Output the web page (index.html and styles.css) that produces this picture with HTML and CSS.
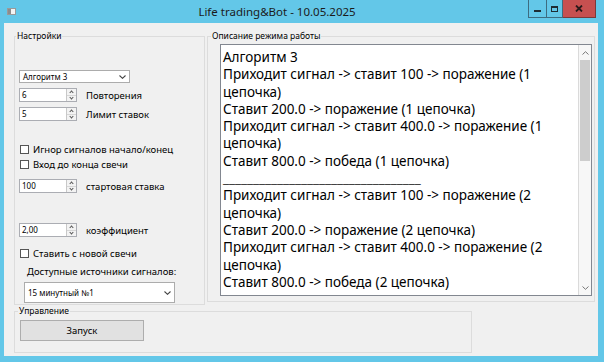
FILE: index.html
```html
<!DOCTYPE html>
<html lang="ru">
<head>
  <meta charset="UTF-8">
  <title>Life trading&amp;Bot - 10.05.2025</title>
  <link rel="stylesheet" href="styles.css">
</head>
<body>
  <div class="window">
    <!-- Title bar -->
    <div class="titlebar">
      <svg class="app-icon" width="9" height="7" viewBox="0 0 9 7">
        <rect x="0.5" y="0.5" width="8" height="6" fill="#f4f4f4" stroke="#9a9a9a"/>
        <rect x="1" y="1" width="3" height="5" fill="#8c8c8c"/>
      </svg>
      <div class="title">Life trading&amp;Bot - 10.05.2025</div>
      <div class="caption-buttons">
        <div class="cap-btn cap-min"><span></span></div>
        <div class="cap-btn cap-max"><span></span></div>
        <div class="cap-btn cap-close">
          <svg width="8" height="7" viewBox="0 0 8 7"><path d="M1 0.5 L7 6.5 M7 0.5 L1 6.5" stroke="#2b1a1a" stroke-width="1.8"/></svg>
        </div>
      </div>
    </div>

    <div class="client">
      <div class="top-row">
        <!-- Settings -->
        <fieldset class="group settings">
          <legend>Настройки</legend>

          <div class="combo algo">
            <span class="combo-text">Алгоритм 3</span>
            <svg class="chevron" width="7" height="4" viewBox="0 0 7 4"><path d="M0.5 0.5 L3.5 3.3 L6.5 0.5" fill="none" stroke="#444" stroke-width="1.1"/></svg>
          </div>

          <div class="spin-row first">
            <div class="spin">
              <span class="spin-value">6</span>
              <span class="spin-btns"><i class="up"></i><i class="down"></i></span>
            </div>
            <span class="spin-label">Повторения</span>
          </div>
          <div class="spin-row">
            <div class="spin">
              <span class="spin-value">5</span>
              <span class="spin-btns"><i class="up"></i><i class="down"></i></span>
            </div>
            <span class="spin-label">Лимит ставок</span>
          </div>

          <label class="check first-check"><span class="box"></span>Игнор сигналов начало/конец</label>
          <label class="check second-check"><span class="box"></span>Вход до конца свечи</label>

          <div class="spin-row stake">
            <div class="spin">
              <span class="spin-value">100</span>
              <span class="spin-btns"><i class="up"></i><i class="down"></i></span>
            </div>
            <span class="spin-label">стартовая ставка</span>
          </div>
          <div class="spin-row coef">
            <div class="spin">
              <span class="spin-value">2,00</span>
              <span class="spin-btns"><i class="up"></i><i class="down"></i></span>
            </div>
            <span class="spin-label">коэффициент</span>
          </div>

          <label class="check third-check"><span class="box"></span>Ставить с новой свечи</label>

          <div class="sources-label">Доступные источники сигналов:</div>
          <div class="combo sources">
            <span class="combo-text">15 минутный №1</span>
            <svg class="chevron" width="7" height="4" viewBox="0 0 7 4"><path d="M0.5 0.5 L3.5 3.3 L6.5 0.5" fill="none" stroke="#444" stroke-width="1.1"/></svg>
          </div>
        </fieldset>

        <!-- Description -->
        <fieldset class="group description">
          <legend>Описание режима работы</legend>
          <div class="memo">
            <div class="memo-text">
              <div>Алгоритм 3</div>
              <div>Приходит сигнал -&gt; ставит 100 -&gt; поражение (1</div>
              <div>цепочка)</div>
              <div>Ставит 200.0 -&gt; поражение (1 цепочка)</div>
              <div>Приходит сигнал -&gt; ставит 400.0 -&gt; поражение (1</div>
              <div>цепочка)</div>
              <div>Ставит 800.0 -&gt; победа (1 цепочка)</div>
              <div class="separator">_________________________________</div>
              <div>Приходит сигнал -&gt; ставит 100 -&gt; поражение (2</div>
              <div>цепочка)</div>
              <div>Ставит 200.0 -&gt; поражение (2 цепочка)</div>
              <div>Приходит сигнал -&gt; ставит 400.0 -&gt; поражение (2</div>
              <div>цепочка)</div>
              <div>Ставит 800.0 -&gt; победа (2 цепочка)</div>
            </div>
            <div class="scrollbar">
              <div class="sb-arrow">
                <svg width="7" height="4" viewBox="0 0 7 4"><path d="M0.5 3.5 L3.5 0.7 L6.5 3.5" fill="none" stroke="#777" stroke-width="1"/></svg>
              </div>
              <div class="sb-thumb"></div>
              <div class="sb-track"></div>
              <div class="sb-arrow">
                <svg width="7" height="4" viewBox="0 0 7 4"><path d="M0.5 0.5 L3.5 3.3 L6.5 0.5" fill="none" stroke="#777" stroke-width="1"/></svg>
              </div>
            </div>
          </div>
        </fieldset>
      </div>

      <!-- Control -->
      <fieldset class="group control">
        <legend>Управление</legend>
        <button class="start-btn">Запуск</button>
      </fieldset>
    </div>
  </div>
</body>
</html>
```

FILE: styles.css
```css
/* Reset */
* {
  box-sizing: border-box;
  margin: 0;
  padding: 0;
}
body {
  width: 604px;
  height: 362px;
  overflow: hidden;
  background-color: #63c7e8;
  font-family: "Noto Sans", "Open Sans", sans-serif;
  color: #000;
}
/* Window frame */
.window {
  width: 604px;
  height: 362px;
  display: flex;
  flex-direction: column;
  background-color: #63c7e8;
}
.titlebar {
  height: 23px;
  display: flex;
  align-items: flex-start;
}
.app-icon {
  margin: 8px 0 0 7px;
}
.title {
  flex: 1;
  text-align: center;
  font-size: 11.5px;
  line-height: 23px;
  color: #1b1b1b;
  padding-left: 10px;
}
.caption-buttons {
  display: flex;
  margin-right: 8px;
  height: 18px;
}
.cap-btn {
  height: 18px;
  display: flex;
  align-items: center;
  justify-content: center;
  border: 1px solid #3d6c80;
  border-top: none;
}
.cap-min {
  width: 18px;
  border-right: none;
}
.cap-min span {
  width: 7px;
  height: 2px;
  margin-top: 5px;
  background-color: #1e2c33;
}
.cap-max {
  width: 17px;
}
.cap-max span {
  width: 7px;
  height: 6px;
  border: 1px solid #1e2c33;
  border-top-width: 2px;
}
.cap-close {
  width: 33px;
  border-left: none;
  border-color: #7a3a3a;
  background-color: #c75050;
}
/* Client area */
.client {
  flex: 1;
  margin: 0 6px 6px 4px;
  background-color: #f0f0f0;
  padding: 7px 0 0 10px;
}
.top-row {
  display: flex;
  gap: 2px;
}
/* Group boxes */
.group {
  border: 1px solid #dcdcdc;
  min-width: 0;
}
.group legend {
  font-size: 8.5px;
  line-height: 12px;
  padding: 0 1px;
  margin-left: 1px;
}
.settings {
  width: 191px;
  height: 275px;
  font-size: 9.5px;
}
.description {
  width: 388px;
  height: 272px;
}
.description legend {
  margin-left: 3px;
}
.control {
  width: 458px;
  height: 48px;
}
.control legend {
  margin-left: 3px;
}
/* Combo boxes */
.combo {
  display: flex;
  align-items: center;
  justify-content: space-between;
  background-color: #fff;
  border: 1px solid #acacac;
  font-size: 8px;
}
.combo-text {
  padding-left: 3px;
}
.chevron {
  margin-right: 3px;
}
.algo {
  width: 111px;
  height: 13px;
  margin: 28px 0 0 4px;
}
.sources {
  width: 151px;
  height: 21px;
  margin: 4px 0 0 9px;
}
/* Numeric spinners */
.spin-row {
  display: flex;
  align-items: center;
  gap: 9px;
  margin: 5px 0 0 4px;
}
.spin-row.stake {
  margin-top: 9px;
}
.spin-row.coef {
  margin-top: 30px;
}
.spin {
  width: 58px;
  height: 14px;
  display: flex;
  background-color: #fff;
  border: 1px solid #abadb3;
}
.spin-value {
  flex: 1;
  font-size: 8px;
  line-height: 12px;
  padding-left: 2px;
}
.spin-btns {
  width: 10px;
  display: flex;
  flex-direction: column;
  border-left: 1px solid #c8c8c8;
  background-color: #f3f3f3;
}
.spin-btns i {
  flex: 1;
  position: relative;
}
.spin-btns i + i {
  border-top: 1px solid #d6d6d6;
}
.spin-btns i::after {
  content: "";
  position: absolute;
  left: 3px;
  width: 2px;
  height: 2px;
  border: solid #555;
  border-width: 1px 0 0 1px;
}
.spin-btns .up::after {
  top: 2px;
  transform: rotate(45deg);
}
.spin-btns .down::after {
  top: 0px;
  transform: rotate(225deg);
}
.spin-label {
  font-size: 9.5px;
}
/* Check boxes */
.check {
  display: flex;
  align-items: center;
  height: 12px;
  gap: 4px;
  margin-left: 5px;
}
.check .box {
  width: 9px;
  height: 9px;
  border: 1px solid #555;
  background-color: #fff;
}
.first-check {
  margin-top: 22px;
}
.second-check {
  margin-top: 3px;
}
.third-check {
  margin-top: 10px;
}
.sources-label {
  margin: 7px 0 0 12px;
  line-height: 12px;
}
/* Description memo */
.memo {
  display: flex;
  width: 372px;
  height: 252px;
  margin: 2px 0 0 12px;
  background-color: #fff;
  border: 1px solid #828790;
}
.memo-text {
  flex: 1;
  padding: 4px 0 0 2px;
  font-size: 13.5px;
  line-height: 17.3px;
  white-space: nowrap;
  overflow: hidden;
}
.separator {
  color: #444;
}
.scrollbar {
  width: 13px;
  display: flex;
  flex-direction: column;
  border-left: 1px solid #dadada;
  background-color: #f7f7f7;
}
.sb-arrow {
  height: 15px;
  display: flex;
  align-items: center;
  justify-content: center;
}
.sb-thumb {
  height: 101px;
  margin: 0 1px;
  background-color: #cdcdcd;
}
.sb-track {
  flex: 1;
}
/* Start button */
.start-btn {
  display: block;
  width: 124px;
  height: 21px;
  margin: 3px 0 0 5px;
  font-family: inherit;
  font-size: 9.5px;
  background-color: #e1e1e1;
  border: 1px solid #adadad;
  color: #000;
}
```
